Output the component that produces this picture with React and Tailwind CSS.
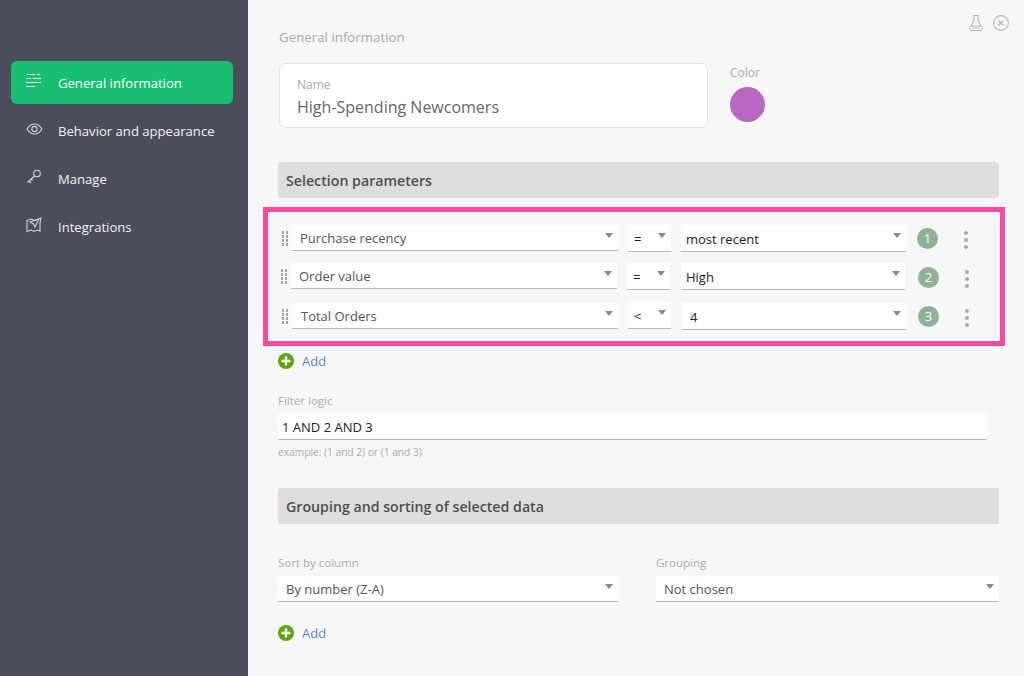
const LinesIcon = () => (
  <svg width="15" height="13" viewBox="0 0 15 13" fill="none" stroke="#e8f8f0" strokeWidth="1">
    <path d="M1 .5h8M11 .5h3M0 4.500h5M7 4.500h8M0 8.500h15M0 12.500h9" />
  </svg>
)

const EyeIcon = () => (
  <svg width="17" height="12" viewBox="0 0 17 12" fill="none" stroke="#d4d4d8" strokeWidth="1.1">
    <path d="M1 6c2-3.200 4.500-5 7.500-5s5.500 1.800 7.500 5c-2 3.200-4.500 5-7.500 5s-5.500-1.800-7.500-5z" />
    <circle cx="8.500" cy="6" r="2.600" />
  </svg>
)

const KeyIcon = () => (
  <svg width="16" height="16" viewBox="0 0 16 16" fill="none" stroke="#d4d4d8" strokeWidth="1.1">
    <circle cx="11" cy="4.500" r="3.300" />
    <path d="M8.500 7 1.500 13.500M3 12l2 2M5 10l1.500 1.500" />
  </svg>
)

const MapIcon = () => (
  <svg width="16" height="16" viewBox="0 0 16 16" fill="none" stroke="#d4d4d8" strokeWidth="1.1">
    <path d="M1 3.500 5 2l3.500 1.500L15 1l-1 5v8l-3-1-3 1.500-3-1.500-4 1.500z" />
    <path d="M4 5l9-3-4 8-1.500-3z" />
  </svg>
)

const FlaskIcon = () => (
  <svg width="14" height="16" viewBox="0 0 14 16" fill="none" stroke="#b5b5b5" strokeWidth="1.1">
    <path d="M4 .5h6M5 .5v5L.8 13c-.5 1 .2 2.500 1.300 2.500h9.800c1.100 0 1.800-1.500 1.300-2.500L9 5.500v-5" />
    <path d="M2.500 11h9M3 13h8" />
  </svg>
)

const CloseIcon = () => (
  <svg width="16" height="16" viewBox="0 0 16 16" fill="none" stroke="#b5b5b5" strokeWidth="1.1">
    <circle cx="8" cy="8" r="7.400" />
    <path d="M5.500 5.500l5 5M10.500 5.500l-5 5" />
  </svg>
)

const PlusIcon = () => (
  <svg width="16" height="16" viewBox="0 0 16 16">
    <circle cx="8" cy="8" r="8" fill="#5aa50e" />
    <path d="M8 3.500v9M3.500 8h9" stroke="#fff" strokeWidth="2.400" />
  </svg>
)

const Grip = () => (
  <div className="grid grid-cols-2 gap-x-[2px] gap-y-[1px] w-[6px] shrink-0">
    {[...Array(8)].map((_, i) => (
      <span key={i} className="w-[2px] h-[3px] bg-[#a3a3a3]" />
    ))}
  </div>
)

const Dots = () => (
  <div className="flex flex-col gap-[3px] items-center">
    <span className="w-[4px] h-[4px] rounded-full bg-[#a8a8a8]" />
    <span className="w-[4px] h-[4px] rounded-full bg-[#a8a8a8]" />
    <span className="w-[4px] h-[4px] rounded-full bg-[#a8a8a8]" />
  </div>
)

const Select = ({ value, className, textClass }) => (
  <div className={"relative bg-white border-b border-[#b8b8b8] flex items-center text-[13px] " + className}>
    <span className={textClass}>{value}</span>
    <span className="absolute right-[5px] top-[8px] w-0 h-0 border-l-[4px] border-r-[4px] border-t-[5px] border-l-transparent border-r-transparent border-t-[#8a8a8a]" />
  </div>
)

const Add = ({ className }) => (
  <div className={"flex items-center gap-2 text-[13px] text-[#5d83c5] " + className}>
    <PlusIcon />
    <span className="pt-[1px]">Add</span>
  </div>
)

const SectionBar = ({ title, className }) => (
  <div className={"h-[36px] bg-[#dedede] rounded-[3px] flex items-center pl-2 pt-[2px] text-[14.200px] font-semibold text-[#4f4f4f] " + className}>
    {title}
  </div>
)

const NavItem = ({ icon, label, active }) => (
  <div className={active
    ? "h-[43px] ml-[11px] mr-[15px] rounded-[6px] bg-[#19bf73] flex items-center pl-[15px] text-[13.100px] text-white mb-[5px]"
    : "h-[43px] ml-[11px] mr-[15px] flex items-center pl-[15px] text-[13.100px] text-[#f2f2f2] mb-[5px]"}>
    <span className="w-[32px] flex -mt-[4px]">{icon}</span>
    <span className="pt-[3px]">{label}</span>
  </div>
)

export default function App() {
  return (
    <div className="flex w-[1024px] h-[676px] overflow-hidden bg-[#f7f7f7] font-['Open_Sans','Noto_Sans',sans-serif]">
      <aside className="w-[248px] shrink-0 bg-[#4b4d5a] pt-[61px]">
        <NavItem active icon={<LinesIcon />} label="General information" />
        <NavItem icon={<EyeIcon />} label="Behavior and appearance" />
        <NavItem icon={<KeyIcon />} label="Manage" />
        <NavItem icon={<MapIcon />} label="Integrations" />
      </aside>

      <main className="relative flex-1 min-w-0 pl-[30px] pr-[25px] pt-[28px]">
        <div className="absolute top-[15px] right-[15px] flex items-center gap-[10px]">
          <FlaskIcon />
          <CloseIcon />
        </div>

        <h1 className="ml-[1px] h-[18px] leading-[18px] text-[13.300px] text-[#a9a9a9]">General information</h1>

        <div className="flex mt-[17px] ml-[1px]">
          <div className="w-[429px] h-[65px] bg-white border border-[#e3e3e3] rounded-[7px] pl-[17px] pt-[13px]">
            <div className="text-[12px] leading-[16px] text-[#ababab]">Name</div>
            <div className="text-[16px] leading-[22px] text-[#666] mt-[3px]">High-Spending Newcomers</div>
          </div>
          <div className="ml-[22px] pt-[1px]">
            <div className="text-[12px] leading-[18px] text-[#ababab]">Color</div>
            <div className="w-[35px] h-[35px] rounded-full bg-[#b868c2] mt-[5px]" />
          </div>
        </div>

        <SectionBar title="Selection parameters" className="mt-[34px]" />

        <div className="w-[742px] h-[139px] -ml-[15px] mt-[9px] border-[5px] border-[#fc4a9c] pl-[14px] pt-[13px] text-[#555]">
          <div className="flex items-center h-[27px]">
            <Grip />
            <Select value="Purchase recency" className="ml-[4px] w-[326px] h-[26px] self-start" textClass="pl-[8px] pt-[3px] text-[#555]" />
            <Select value="=" className="ml-[10px] w-[43px] h-[27px]" textClass="pl-[6px] pt-[3px] text-[#222]" />
            <Select value="most recent" className="ml-[10px] w-[225px] h-[27px]" textClass="pl-[5px] pt-[3px] text-[#222]" />
            <span className="ml-[11px] w-[21px] h-[21px] rounded-full bg-[#8fb296] text-white text-[13px] flex items-center justify-center">1</span>
            <span className="ml-[26px] mt-[3px]"><Dots /></span>
          </div>
          <div className="flex items-center h-[27px] mt-[11px] -ml-[1px]">
            <Grip />
            <Select value="Order value" className="ml-[4px] w-[326px] h-[26px] self-start" textClass="pl-[8px] pt-[3px] text-[#555]" />
            <Select value="=" className="ml-[10px] w-[43px] h-[27px]" textClass="pl-[6px] pt-[3px] text-[#222]" />
            <Select value="High" className="ml-[11px] w-[224px] h-[27px]" textClass="pl-[5px] pt-[3px] text-[#222]" />
            <span className="ml-[13px] mt-[2px] w-[21px] h-[21px] rounded-full bg-[#8fb296] text-white text-[13px] flex items-center justify-center">2</span>
            <span className="ml-[26px] mt-[5px]"><Dots /></span>
          </div>
          <div className="flex items-center h-[27px] mt-[13px]">
            <Grip />
            <Select value="Total Orders" className="ml-[4px] w-[326px] h-[26px] self-start" textClass="pl-[9px] pt-[3px] text-[#555]" />
            <Select value="<" className="ml-[10px] w-[43px] h-[27px] self-start -mt-[1px]" textClass="pl-[6px] pt-[3px] text-[#222]" />
            <Select value="4" className="ml-[11px] w-[224px] h-[27px]" textClass="pl-[8px] pt-[3px] text-[#222]" />
            <span className="ml-[12px] w-[21px] h-[21px] rounded-full bg-[#8fb296] text-white text-[13px] flex items-center justify-center">3</span>
            <span className="ml-[26px] mt-[3px]"><Dots /></span>
          </div>
        </div>

        <Add className="mt-[7px] h-[16px]" />

        <div className="mt-[24px] text-[11.500px] leading-[16px] text-[#ababab]">Filter logic</div>
        <div className="mt-[5px] w-[709px] h-[26px] bg-white border-b border-[#b8b8b8] pl-[4px] pt-[3px] flex items-center text-[13px] text-[#222]">1 AND 2 AND 3</div>
        <div className="mt-[5px] text-[10.200px] leading-[14px] text-[#ababab]">example: (1 and 2) or (1 and 3)</div>

        <SectionBar title="Grouping and sorting of selected data" className="mt-[29px]" />

        <div className="flex mt-[31px]">
          <div className="w-[340px]">
            <div className="text-[11.500px] leading-[16px] text-[#ababab]">Sort by column</div>
            <Select value="By number (Z-A)" className="mt-[5px] h-[26px]" textClass="pl-[8px] pt-[2px] text-[#555]" />
          </div>
          <div className="w-[343px] ml-[38px]">
            <div className="text-[11.500px] leading-[16px] text-[#ababab]">Grouping</div>
            <Select value="Not chosen" className="mt-[5px] h-[26px]" textClass="pl-[8px] pt-[2px] text-[#555]" />
          </div>
        </div>

        <Add className="mt-[23px] h-[16px]" />
      </main>
    </div>
  )
}
